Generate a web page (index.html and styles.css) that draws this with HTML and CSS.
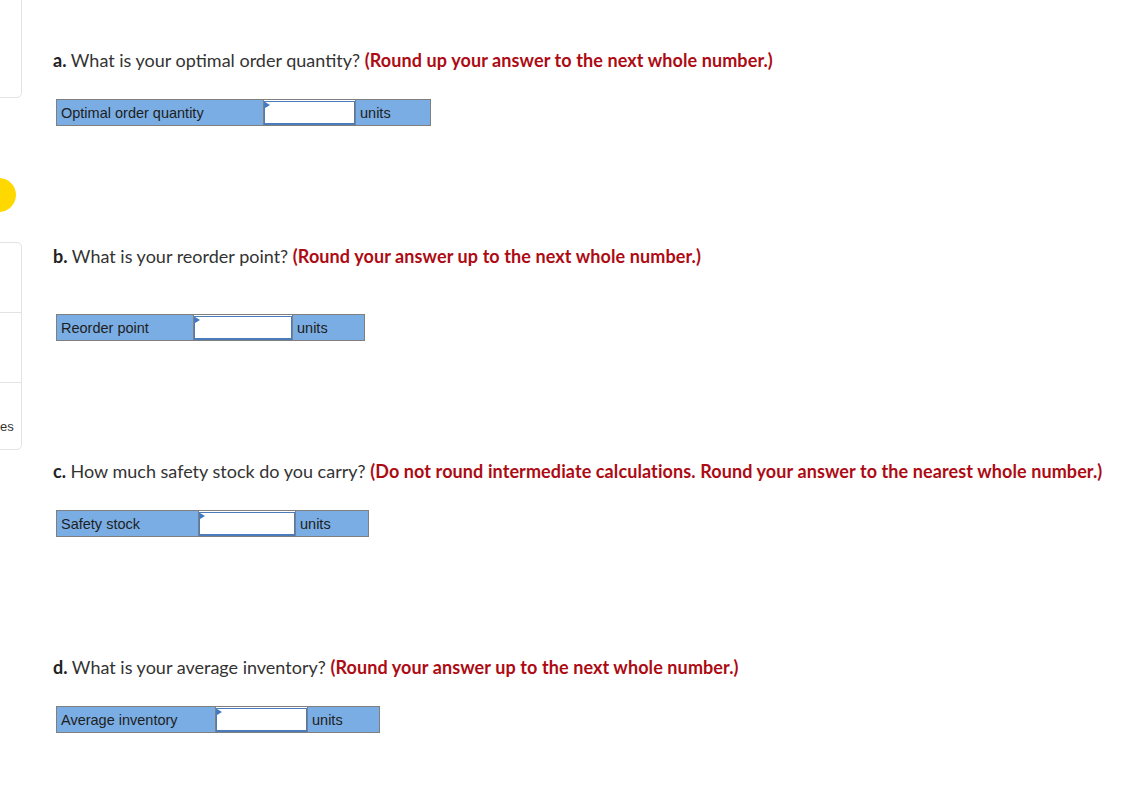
FILE: index.html
```html
<!DOCTYPE html>
<html>
<head>
<meta charset="utf-8">
<link rel="stylesheet" href="styles.css">
</head>
<body>
<div class="page">
  <aside class="sidebar">
    <div class="card card-top"></div>
    <div class="dot"></div>
    <div class="card card-list">
      <div class="card-item"></div>
      <div class="card-item"></div>
      <div class="card-item card-item-last"><span class="card-text">es</span></div>
    </div>
  </aside>
  <main class="content">
    <section class="question q-a">
      <p class="prompt"><b class="letter">a.</b> What is your optimal order quantity? <b class="hint">(Round up your answer to the next whole number.)</b></p>
      <table class="answer">
        <tr>
          <td class="label w-a">Optimal order quantity</td>
          <td class="entry e-a"><span class="box"></span></td>
          <td class="unit u-a">units</td>
        </tr>
      </table>
    </section>
    <section class="question q-b">
      <p class="prompt"><b class="letter">b.</b> What is your reorder point? <b class="hint">(Round your answer up to the next whole number.)</b></p>
      <table class="answer">
        <tr>
          <td class="label w-b">Reorder point</td>
          <td class="entry e-b"><span class="box"></span></td>
          <td class="unit u-b">units</td>
        </tr>
      </table>
    </section>
    <section class="question q-c">
      <p class="prompt"><b class="letter">c.</b> How much safety stock do you carry? <b class="hint">(Do not round intermediate calculations. Round your answer to the nearest whole number.)</b></p>
      <table class="answer">
        <tr>
          <td class="label w-c">Safety stock</td>
          <td class="entry e-c"><span class="box"></span></td>
          <td class="unit u-c">units</td>
        </tr>
      </table>
    </section>
    <section class="question q-d">
      <p class="prompt"><b class="letter">d.</b> What is your average inventory? <b class="hint">(Round your answer up to the next whole number.)</b></p>
      <table class="answer">
        <tr>
          <td class="label w-d">Average inventory</td>
          <td class="entry e-d"><span class="box"></span></td>
          <td class="unit u-d">units</td>
        </tr>
      </table>
    </section>
  </main>
</div>
</body>
</html>
```
FILE: styles.css
```css
html, body {
  margin: 0;
  padding: 0;
  background: #fff;
}
.page {
  position: relative;
  width: 1139px;
  height: 795px;
  overflow: hidden;
  display: flex;
}
.sidebar {
  width: 22px;
  flex: none;
  position: relative;
  display: flex;
  flex-direction: column;
}
.card {
  margin-left: -40px;
  width: 62px;
  border: 1px solid #e3e3e3;
  border-radius: 5px;
  background: #fff;
  box-sizing: border-box;
}
.card-top {
  margin-top: -10px;
  height: 108px;
}
.dot {
  margin-top: 80px;
  margin-left: -18px;
  width: 34px;
  height: 34px;
  border-radius: 50%;
  background: #ffd800;
}
.card-list {
  margin-top: 30px;
  height: 208px;
  display: flex;
  flex-direction: column;
}
.card-item {
  height: 69px;
  border-bottom: 1px solid #e3e3e3;
  position: relative;
}
.card-item-last {
  border-bottom: none;
  flex: 1;
}
.card-text {
  position: absolute;
  left: 39px;
  top: 36px;
  font-family: "Liberation Sans", Arial, sans-serif;
  font-size: 13px;
  color: #333;
}
.content {
  flex: 1;
  padding-left: 31px;
  font-family: Lato, "Open Sans", sans-serif;
}
.question {
  margin: 0;
}
.q-a { padding-top: 49px; }
.q-b { padding-top: 119px; }
.q-c { padding-top: 119px; }
.q-d { padding-top: 119px; }
.prompt {
  margin: 0;
  font-size: 18px;
  line-height: 22px;
  color: #333;
}
.letter {
  font-weight: 700;
  color: #222;
}
.hint {
  font-weight: 700;
  color: #ad0b14;
  letter-spacing: 0.1px;
}
.answer {
  margin-top: 28px;
  margin-left: 3px;
  border-collapse: collapse;
  font-family: "Liberation Sans", Arial, sans-serif;
  font-size: 14.5px;
  color: #1e1e1e;
}
.q-b .answer { margin-top: 47px; }
.answer td {
  height: 26px;
  padding: 0;
  border: 1px solid #7f7f7f;
  background: #7aade3;
  vertical-align: middle;
  box-sizing: border-box;
}
.label { padding-left: 4px !important; }
.unit { padding-left: 4px !important; }
.entry {
  position: relative;
  background: #fff !important;
}
.box {
  display: block;
  height: 24px;
  box-sizing: border-box;
  border: 1px solid #4a7bbd;
  border-bottom-width: 2px;
  background: #fff;
  position: relative;
}
.box::before {
  content: "";
  position: absolute;
  left: 0;
  top: 0;
  border-left: 5px solid #3f78c4;
  border-top: 3px solid transparent;
  border-bottom: 3px solid transparent;
}
.w-a { width: 207px; }
.e-a { width: 92px; }
.u-a { width: 75px; }
.w-b { width: 137px; }
.e-b { width: 99px; }
.u-b { width: 72px; }
.w-c { width: 142px; }
.e-c { width: 97px; }
.u-c { width: 73px; }
.w-d { width: 159px; }
.e-d { width: 92px; }
.u-d { width: 72px; }
```
